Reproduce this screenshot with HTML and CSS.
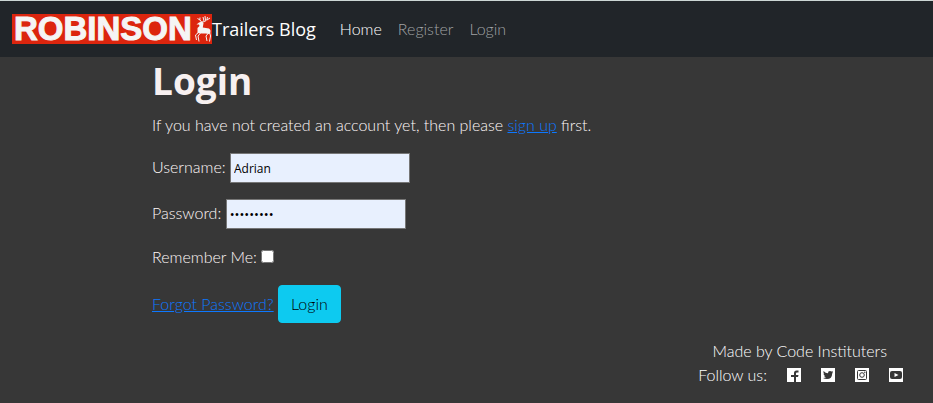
FILE: index.html
```html
<!DOCTYPE html>
<html lang="en">
<head>
<meta charset="utf-8">
<meta name="viewport" content="width=device-width, initial-scale=1">
<title>Robinson Trailers Blog - Login</title>
<link rel="stylesheet" href="styles.css">
</head>
<body>
<header class="navbar">
  <a class="brand" href="#">
    <span class="logo">
      <span class="logo-word">ROBINSON</span>
      <svg class="stag" viewBox="0 0 18 28" aria-hidden="true">
        <path class="stag-body" d="M5 7.5 8 6.5 9.500 8 8.800 12.500 15 13.500Q17 14.500 16.500 17L15.500 19 11.500 18.500 8 18.500 3.500 18 3.500 13 5.500 11 5 9.500 2.500 9.500Z"/>
        <path class="stag-line" d="M7.500 7Q5 5 6 2.500M6 5 3.500 3.500M8 7Q13 7 13.500 2M10 6 9 2M11.500 5.500 11 1M13 5 16 3M4.500 17.500 1.500 20 2.500 25M6.500 18 4 21 5 26.500M14.500 18 12 21 13 26M15.500 17 16.500 21 15.500 26.500"/>
      </svg>
    </span>
    <span>Trailers Blog</span>
  </a>
  <nav class="links">
    <a class="active" href="#">Home</a>
    <a href="#">Register</a>
    <a href="#">Login</a>
  </nav>
</header>
<main class="content">
  <h1>Login</h1>
  <p>If you have not created an account yet, then please <a href="#">sign up</a> first.</p>
  <form>
    <p><label for="username">Username:</label> <input class="field" type="text" id="username" value="Adrian"></p>
    <p><label for="password">Password:</label> <input class="field secret" type="password" id="password" value="trailers1"></p>
    <p><label for="remember">Remember Me:</label> <input class="check" type="checkbox" id="remember"></p>
    <div><a href="#">Forgot Password?</a> <button class="btn" type="submit">Login</button></div>
  </form>
</main>
<footer class="footer">
  <div class="credit">Made by Code Instituters</div>
  <div class="social">
    <span>Follow us:</span>
    <a href="#" aria-label="Facebook"><svg viewBox="0 0 14 14"><path class="tile" d="M0 0H14V14H0Z"/><path class="mark" d="M7 14V9H4V7H7V5Q7 2.500 9.500 2.500H11.500V4.500H10Q9 4.500 9 5.500V7H11.500L11 9H9V14Z"/></svg></a>
    <a href="#" aria-label="Twitter"><svg viewBox="0 0 14 14"><path class="tile" d="M0 0H14V14H0Z"/><path class="mark" d="M2.500 3Q4.500 5.300 7 5.300 6.800 3 9 3 10 3 10.500 3.600L12 3.200 11.300 4.500 12 4.500 11.200 5.500Q11 11 6 11 3.800 11 2 10 4 10 5 9.200 3.500 9 3 7.800L4 7.700Q2.500 7 2.400 5.500L3.300 5.700Q2 4.500 2.500 3Z"/></svg></a>
    <a href="#" aria-label="Instagram"><svg viewBox="0 0 14 14"><path class="tile" d="M0 0H14V14H0Z"/><rect class="ring" x="2.500" y="2.500" width="9" height="9" rx="1"/><circle class="ring" cx="7" cy="7" r="2.300"/><circle class="mark" cx="9.800" cy="4.300" r=".7"/></svg></a>
    <a href="#" aria-label="YouTube"><svg viewBox="0 0 14 14"><path class="tile" d="M0 0H14V14H0Z"/><rect class="mark" x="1" y="3" width="12" height="8" rx="2"/><path class="tile" d="M5.500 5 9.500 7 5.500 9Z"/></svg></a>
  </div>
</footer>
</body>
</html>
```
FILE: styles.css
```css
* {
  box-sizing: border-box;
}

body {
  margin: 0;
  background: #373737;
  color: #fff8f8;
  font: 300 16px/24px Lato, sans-serif;
}

.navbar {
  display: flex;
  align-items: center;
  gap: 16px;
  height: 57px;
  padding: 0 12px;
  border-top: 1px solid #ccd6d4;
  background: #212529;
}

.brand {
  display: flex;
  align-items: center;
  color: #fff;
  font: 400 18px/30px "Open Sans", sans-serif;
  text-decoration: none;
}

.logo {
  display: flex;
  align-items: center;
  width: 200px;
  height: 30px;
  padding-left: 2px;
  background: #dc250e;
}

.logo-word {
  flex: 1;
  color: #f5f5f5;
  font: 700 33px/34px "Liberation Sans", sans-serif;
  -webkit-text-stroke: 1px #f5f5f5;
}

.stag {
  width: 18px;
  height: 28px;
}

.stag-body {
  fill: #f5f5f5;
}

.stag-line {
  fill: none;
  stroke: #f5f5f5;
}

.links {
  display: flex;
}

.links a {
  padding: 8px;
  color: #a0a2a4;
  text-decoration: none;
}

.links .active {
  color: #fff;
}

.content {
  padding: 0 152px;
}

h1 {
  margin: 0 0 8px;
  color: #f7f0f0;
  font: 700 37px/48px "Open Sans", sans-serif;
}

p {
  margin: 0 0 16px;
}

.content a {
  color: #0d78ff;
}

.field {
  width: 180px;
  height: 30px;
  padding: 1px 3px;
  border: 1px solid #767676;
  background: #e8f0fe;
  color: #000;
  font: 400 12px/24px "Open Sans", sans-serif;
}

.secret {
  font-size: 13px;
}

.check {
  width: 13px;
  height: 13px;
  margin: 0;
}

.btn {
  padding: 6px 12px;
  border: 1px solid #0dcaf0;
  border-radius: 4px;
  background: #0dcaf0;
  color: #000;
  font: 300 16px/24px Lato, sans-serif;
}

.footer {
  display: flex;
  flex-direction: column;
  align-items: flex-end;
  padding: 16px 30px 0;
  color: #fff;
}

.credit {
  padding-right: 16px;
}

.social {
  display: flex;
  align-items: center;
  gap: 20px;
}

.social a {
  display: flex;
}

.social svg {
  width: 14px;
  height: 14px;
}

.tile {
  fill: #fff;
}

.mark {
  fill: #373737;
}

.ring {
  fill: none;
  stroke: #373737;
}
```
